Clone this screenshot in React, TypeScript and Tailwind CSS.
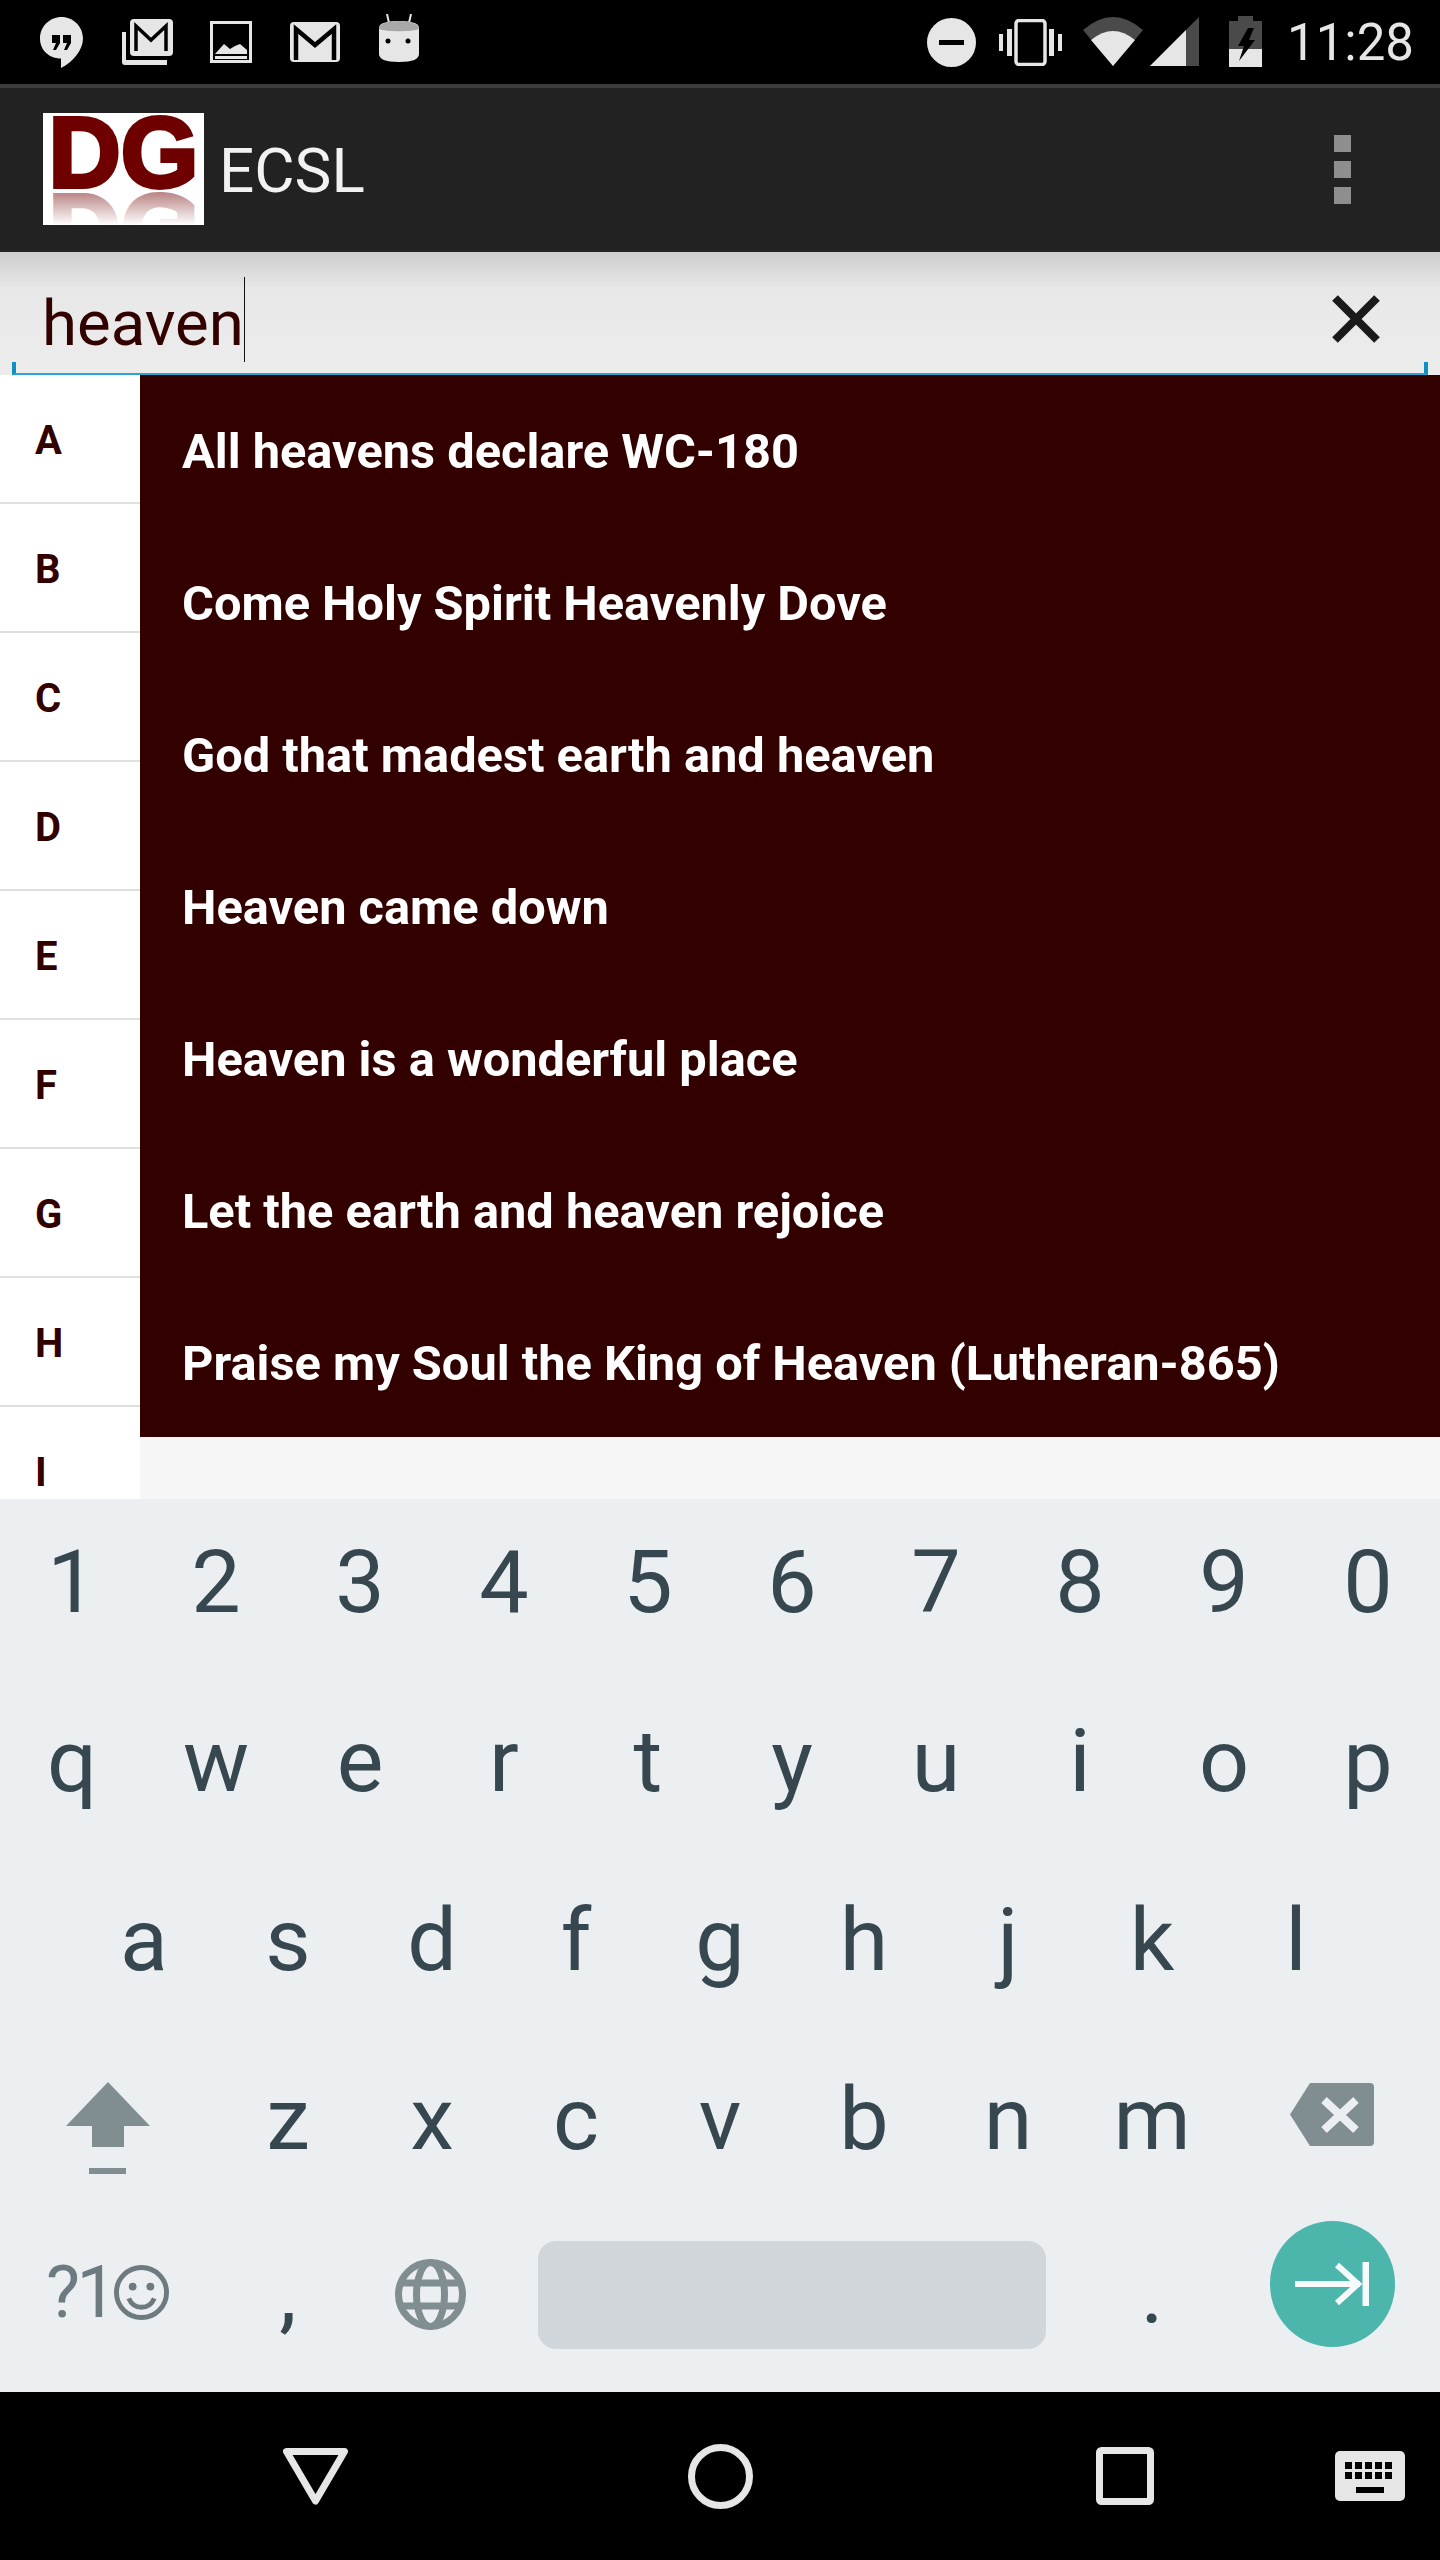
const INDEX = ['A', 'B', 'C', 'D', 'E', 'F', 'G', 'H', 'I']

const SONGS = [
  'All heavens declare WC-180',
  'Come Holy Spirit Heavenly Dove',
  'God that madest earth and heaven',
  'Heaven came down',
  'Heaven is a wonderful place',
  'Let the earth and heaven rejoice',
  'Praise my Soul the King of Heaven (Lutheran-865)',
]

const ICON = '#e6e6e6'
const DIM = '#4a4a4a'
const KEY_ICON = '#808e92'

// ── Status bar ────────────────────────────────────────────────────────────────

function StatusBar() {
  return (
    <div className="flex h-[84px] shrink-0 bg-black">
      <svg className="ml-[40px] mt-[17px] h-[51px] w-[43px]" viewBox="0 0 43 51">
        <path d="M21.5 0C9.6 0 0 9.6 0 21.5 0 33 9 41.5 21 41.5V51C33 45 43 33 43 21.5 43 9.6 33.4 0 21.5 0Z" fill={ICON} />
        <path d="M12 18h8v8l-4 7h-3l3-7h-4zM23 18h8v8l-4 7h-3l3-7h-4z" fill="#000" />
      </svg>
      <svg className="ml-[39px] mt-[19px] h-[46px] w-[51px]" viewBox="0 0 51 46">
        <path d="M0 13h4v28h41v5H3a3 3 0 0 1-3-3z" fill={ICON} />
        <rect x="8" y="0" width="43" height="37" rx="4" fill={ICON} />
        <path d="M14 32V7l15 14 15-14v25" fill="none" stroke="#000" strokeWidth="3.500" />
      </svg>
      <svg className="ml-[37px] mt-[21px] h-[42px] w-[42px]" viewBox="0 0 42 42">
        <rect x="1.5" y="1.5" width="39" height="39" fill="none" stroke={ICON} strokeWidth="3" />
        <path d="M5 33l9-10 6 5 5-3 5-2 7 6v4H5z" fill={ICON} />
        <rect x="5" y="35" width="32" height="3" fill={ICON} />
      </svg>
      <svg className="ml-[38px] mt-[22px] h-[40px] w-[50px]" viewBox="0 0 50 40">
        <rect width="50" height="40" rx="4" fill={ICON} />
        <path d="M6 38V7l19 16L44 7v31" fill="none" stroke="#000" strokeWidth="4.500" />
      </svg>
      <svg className="ml-[39px] mt-[14px] h-[48px] w-[40px]" viewBox="0 0 40 48">
        <path d="M8 0l2 9M32 0l-2 9" stroke={ICON} strokeWidth="2" />
        <path d="M0 14c0-5 8-7 20-7s20 2 20 7v26c0 5-6 8-20 8S0 45 0 40z" fill={ICON} />
        <path d="M0 15c0-5 8-8 20-8s20 3 20 8c-6 3-34 3-40 0z" fill="#a8a8a8" />
        <circle cx="9" cy="27" r="2.5" fill="#000" />
        <circle cx="29" cy="27" r="2.5" fill="#000" />
      </svg>

      <svg className="ml-[508px] mt-[18px] h-[49px] w-[49px]" viewBox="0 0 49 49">
        <circle cx="24.5" cy="24.5" r="24.5" fill={ICON} />
        <rect x="12" y="22" width="25" height="5" fill="#000" />
      </svg>
      <svg className="ml-[23px] mt-[19px] h-[47px] w-[63px]" viewBox="0 0 63 47">
        <rect x="17" y="1.5" width="29" height="44" rx="3" fill="none" stroke={ICON} strokeWidth="3.500" />
        <rect x="0" y="15" width="4" height="17" fill={ICON} />
        <rect x="8" y="10" width="5" height="27" fill={ICON} />
        <rect x="50" y="10" width="5" height="27" fill={ICON} />
        <rect x="59" y="15" width="4" height="17" fill={ICON} />
      </svg>
      <svg className="ml-[21px] mt-[17px] h-[49px] w-[60px]" viewBox="0 0 60 49">
        <path d="M0 13Q30-13 60 13L30 49Z" fill={DIM} />
        <path d="M8 23Q30 5 52 23L30 49Z" fill={ICON} />
      </svg>
      <svg className="ml-[7px] mt-[17px] h-[49px] w-[49px]" viewBox="0 0 49 49">
        <path d="M0 49L49 0V49Z" fill={DIM} />
        <path d="M0 49L36 13V49Z" fill={ICON} />
      </svg>
      <svg className="ml-[30px] mt-[16px] h-[51px] w-[33px]" viewBox="0 0 33 51">
        <path d="M9 0h15v5h9v46H0V5h9z" fill={DIM} />
        <path d="M0 33h33v18H0z" fill={ICON} />
        <path d="M19 12h6l-5 12h6L10 45l5-15H9z" fill="#000" />
      </svg>
      <span className="ml-[25px] mt-[18px] font-['Roboto',sans-serif] text-[51px] leading-[50px] text-[#e6e6e6]">11:28</span>
    </div>
  )
}

// ── Action bar ────────────────────────────────────────────────────────────────

function Logo() {
  return (
    <div className="flex h-[112px] w-[161px] flex-col items-center overflow-hidden bg-white font-['Liberation_Sans',sans-serif] text-[100px] font-bold leading-[78px] text-[#6e0000] [-webkit-text-stroke:4px_#6e0000]">
      <div className="h-[78px] shrink-0">DG</div>
      <div className="relative h-[34px] w-full shrink-0 overflow-hidden text-center">
        <div className="-scale-y-100">DG</div>
        <div className="absolute inset-0 bg-gradient-to-b from-white/50 to-white" />
      </div>
    </div>
  )
}

function ActionBar() {
  return (
    <div className="flex h-[168px] shrink-0 flex-col bg-[#222222]">
      <div className="h-[4px] bg-[#3c3c3c]" />
      <div className="flex flex-1 items-center pb-[2px]">
        <div className="ml-[43px]">
          <Logo />
        </div>
        <span className="ml-[15px] mt-[4px] font-['Roboto',sans-serif] text-[62px] font-normal leading-none text-[#f2f2f2]">ECSL</span>
        <div className="ml-auto mr-[89px] flex flex-col gap-[9px]">
          <div className="h-[17px] w-[17px] bg-[#8e8e8e]" />
          <div className="h-[17px] w-[17px] bg-[#8e8e8e]" />
          <div className="h-[17px] w-[17px] bg-[#8e8e8e]" />
        </div>
      </div>
    </div>
  )
}

// ── Search field ──────────────────────────────────────────────────────────────

function SearchField() {
  return (
    <div className="flex h-[123px] shrink-0 flex-col bg-gradient-to-b from-[#cdcdcd] via-[#e8e8e8] via-30% to-[#ececec]">
      <div className="flex flex-1 items-end">
        <span className="mb-[7px] ml-[42px] font-['Roboto',sans-serif] text-[63.500px] leading-none text-[#330000]">heaven</span>
        <div className="h-[85px] w-[1px] bg-[#111111]" />
        <svg className="mb-[19px] ml-auto mr-[59px] h-[48px] w-[50px]" viewBox="0 0 50 48">
          <path d="M4 3l42 42M46 3L4 45" stroke="#1a1a1a" strokeWidth="8" fill="none" />
        </svg>
      </div>
      <div className="mx-[12px] h-[13px] border-x-4 border-b-[2px] border-x-[#0f8fc4] border-b-[#2ba3d3]" />
    </div>
  )
}

// ── Song list with index column ───────────────────────────────────────────────

function SongList() {
  return (
    <div className="flex h-[1124px] shrink-0 overflow-hidden font-['Roboto',sans-serif]">
      <div className="w-[140px] shrink-0 bg-white">
        {INDEX.map((letter) => (
          <div
            key={letter}
            className="flex h-[129px] shrink-0 items-center border-b-2 border-[#e0e0e0] pl-[35px] pt-[5px] text-[40px] font-bold text-[#330000]"
          >
            {letter}
          </div>
        ))}
      </div>
      <div className="flex-1 bg-[#f6f6f6]">
        <ul className="h-[1062px] bg-[#330000] pl-[42px]">
          {SONGS.map((song) => (
            <li key={song} className="flex h-[152px] items-center pt-[1px] text-[48.750px] font-bold text-white">
              {song}
            </li>
          ))}
        </ul>
      </div>
    </div>
  )
}

// ── Keyboard ──────────────────────────────────────────────────────────────────

function Key({ label }: { label: string }) {
  return <div className="flex h-full w-[144px] shrink-0 items-center justify-center pb-[13px]">{label}</div>
}

function Keyboard() {
  return (
    <div className="flex h-[893px] shrink-0 flex-col bg-[#eceff1] font-['Roboto',sans-serif] text-[88px] leading-none text-[#37474f]">
      <div className="flex h-[179px] shrink-0">
        {'1234567890'.split('').map((k) => <Key key={k} label={k} />)}
      </div>
      <div className="flex h-[179px] shrink-0">
        {'qwertyuiop'.split('').map((k) => <Key key={k} label={k} />)}
      </div>
      <div className="flex h-[179px] shrink-0 justify-center">
        {'asdfghjkl'.split('').map((k) => <Key key={k} label={k} />)}
      </div>
      <div className="flex h-[179px] shrink-0">
        <div className="flex w-[216px] shrink-0 items-center justify-center pt-[5px]">
          <svg className="h-[92px] w-[84px]" viewBox="0 0 84 92">
            <path d="M42 0L84 44H58V65H26V44H0Z" fill={KEY_ICON} />
            <rect x="23" y="86" width="37" height="6" fill={KEY_ICON} />
          </svg>
        </div>
        {'zxcvbnm'.split('').map((k) => <Key key={k} label={k} />)}
        <div className="flex w-[216px] shrink-0 items-center justify-center pb-[22px]">
          <svg className="h-[63px] w-[84px]" viewBox="0 0 84 63">
            <path d="M20 0H80a4 4 0 0 1 4 4V59a4 4 0 0 1-4 4H20L0 31.500Z" fill={KEY_ICON} />
            <path d="M34 17L66 47M66 17L34 47" stroke="#eceff1" strokeWidth="8" fill="none" />
          </svg>
        </div>
      </div>
      <div className="flex flex-1">
        <div className="flex w-[216px] shrink-0 items-start pl-[46px] pt-[48px] text-[#6d7b81]">
          <span className="text-[72px] leading-[60px] tracking-[-0.05em]">?1</span>
          <svg className="ml-[1px] mt-[2px] h-[55px] w-[55px]" viewBox="0 0 56 56">
            <circle cx="28" cy="28" r="25.500" fill="none" stroke="#6d7b81" strokeWidth="5" />
            <circle cx="19" cy="22" r="4" fill="#6d7b81" />
            <circle cx="37" cy="22" r="4" fill="#6d7b81" />
            <path d="M15 34c3 7 8 9 13 9s10-2 13-9" fill="none" stroke="#6d7b81" strokeWidth="5" />
          </svg>
        </div>
        <div className="flex w-[144px] shrink-0 items-center justify-center pb-[24px]">,</div>
        <div className="flex w-[144px] shrink-0 items-center justify-center pb-[19px] pr-[3px]">
          <svg className="h-[71px] w-[71px]" viewBox="0 0 71 71" fill="none" stroke={KEY_ICON} strokeWidth="7">
            <circle cx="35.500" cy="35.500" r="32" />
            <ellipse cx="35.500" cy="35.500" rx="14" ry="32" />
            <path d="M5 24H66M5 47H66" />
          </svg>
        </div>
        <div className="flex w-[576px] shrink-0 px-[34px] pt-[26px]">
          <div className="h-[108px] w-full rounded-[18px] bg-[#d0d6d9]" />
        </div>
        <div className="flex w-[144px] shrink-0 items-center justify-center pb-[24px]">.</div>
        <div className="flex w-[216px] shrink-0 justify-center pt-[6px]">
          <div className="flex h-[126px] w-[125px] items-center justify-center rounded-full bg-[#4db6ac]">
            <svg className="h-[44px] w-[74px]" viewBox="0 0 74 44" fill="none" stroke="#f5fbfa" strokeWidth="6">
              <path d="M0 22H65M42 3L63 22L42 41" />
              <path d="M71 0V44" strokeWidth="7" />
            </svg>
          </div>
        </div>
      </div>
    </div>
  )
}

// ── Navigation bar ────────────────────────────────────────────────────────────

function NavBar() {
  return (
    <div className="flex h-[168px] shrink-0 bg-black pt-[52px]">
      <svg className="ml-[283px] mt-[4px] h-[57px] w-[65px]" viewBox="0 0 65 57">
        <path d="M3.500 3.500H61.500L32.500 53Z" fill="none" stroke={ICON} strokeWidth="7" strokeLinejoin="round" />
      </svg>
      <svg className="ml-[340px] h-[65px] w-[65px]" viewBox="0 0 65 65">
        <circle cx="32.500" cy="32.500" r="29" fill="none" stroke={ICON} strokeWidth="7" />
      </svg>
      <svg className="ml-[343px] mt-[3px] h-[58px] w-[58px]" viewBox="0 0 58 58">
        <rect x="3.500" y="3.500" width="51" height="51" rx="2" fill="none" stroke={ICON} strokeWidth="7" />
      </svg>
      <svg className="ml-[181px] mt-[7px] h-[50px] w-[70px]" viewBox="0 0 70 50">
        <rect width="70" height="50" rx="5" fill={ICON} />
        <path d="M10 11h7v7h-7zM20 11h7v7h-7zM30 11h7v7h-7zM40 11h7v7h-7zM50 11h7v7h-7zM10 21h7v7h-7zM20 21h7v7h-7zM30 21h7v7h-7zM40 21h7v7h-7zM50 21h7v7h-7zM21 36h28v6H21z" fill="#000" />
      </svg>
    </div>
  )
}

export default function App() {
  return (
    <div className="flex h-[2560px] w-[1440px] flex-col overflow-hidden bg-black">
      <StatusBar />
      <ActionBar />
      <SearchField />
      <SongList />
      <Keyboard />
      <NavBar />
    </div>
  )
}
